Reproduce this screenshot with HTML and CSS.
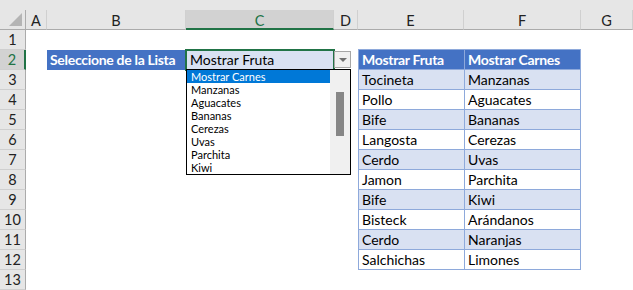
FILE: index.html
```html
<!DOCTYPE html>
<html lang="es">
<head>
    <meta charset="UTF-8">
    <title>Lista desplegable</title>
    <link rel="stylesheet" href="styles.css">
</head>
<body>
    <div class="sheet">
        <div class="top-band"></div>

        <div class="row heads">
            <div class="corner"><span class="tri"></span></div>
            <div class="col-head">A</div>
            <div class="col-head">B</div>
            <div class="col-head active">C</div>
            <div class="col-head">D</div>
            <div class="col-head">E</div>
            <div class="col-head">F</div>
            <div class="col-head">G</div>
        </div>

        <div class="row">
            <div class="row-head">1</div>
            <div></div><div></div><div></div><div></div>
            <div class="edge"></div><div class="edge"></div>
        </div>
        <div class="row">
            <div class="row-head active">2</div>
            <div></div>
            <div class="label">Seleccione de la Lista</div>
            <div class="current">Mostrar Fruta</div>
            <div></div>
            <div class="tcell th e">Mostrar Fruta</div>
            <div class="tcell th f">Mostrar Carnes</div>
        </div>
        <div class="row band">
            <div class="row-head">3</div>
            <div></div><div></div><div></div><div></div>
            <div class="tcell e">Tocineta</div><div class="tcell f">Manzanas</div>
        </div>
        <div class="row">
            <div class="row-head">4</div>
            <div></div><div></div><div></div><div></div>
            <div class="tcell e">Pollo</div><div class="tcell f">Aguacates</div>
        </div>
        <div class="row band">
            <div class="row-head">5</div>
            <div></div><div></div><div></div><div></div>
            <div class="tcell e">Bife</div><div class="tcell f">Bananas</div>
        </div>
        <div class="row">
            <div class="row-head">6</div>
            <div></div><div></div><div></div><div></div>
            <div class="tcell e">Langosta</div><div class="tcell f">Cerezas</div>
        </div>
        <div class="row band">
            <div class="row-head">7</div>
            <div></div><div></div><div></div><div></div>
            <div class="tcell e">Cerdo</div><div class="tcell f">Uvas</div>
        </div>
        <div class="row">
            <div class="row-head">8</div>
            <div></div><div></div><div></div><div></div>
            <div class="tcell e">Jamon</div><div class="tcell f">Parchita</div>
        </div>
        <div class="row band">
            <div class="row-head">9</div>
            <div></div><div></div><div></div><div></div>
            <div class="tcell e">Bife</div><div class="tcell f">Kiwi</div>
        </div>
        <div class="row">
            <div class="row-head">10</div>
            <div></div><div></div><div></div><div></div>
            <div class="tcell e">Bisteck</div><div class="tcell f">Arándanos</div>
        </div>
        <div class="row band">
            <div class="row-head">11</div>
            <div></div><div></div><div></div><div></div>
            <div class="tcell e">Cerdo</div><div class="tcell f">Naranjas</div>
        </div>
        <div class="row">
            <div class="row-head">12</div>
            <div></div><div></div><div></div><div></div>
            <div class="tcell e">Salchichas</div><div class="tcell f">Limones</div>
        </div>
        <div class="row">
            <div class="row-head">13</div>
        </div>

        <!-- validation dropdown, open -->
        <div class="drop-btn"><span class="arrow"></span></div>
        <div class="listbox">
            <ul class="items">
                <li class="selected">Mostrar Carnes</li>
                <li>Manzanas</li>
                <li>Aguacates</li>
                <li>Bananas</li>
                <li>Cerezas</li>
                <li>Uvas</li>
                <li>Parchita</li>
                <li>Kiwi</li>
            </ul>
            <div class="scroll"><span class="thumb"></span></div>
        </div>
    </div>
</body>
</html>
```

FILE: styles.css
```css
* {
    box-sizing: border-box;
}
body {
    margin: 0;
    background: #ffffff;
    font-family: Lato, "Open Sans", sans-serif;
    color: #000000;
}
.sheet {
    position: relative;
    width: 633px;
    height: 290px;
    overflow: hidden;
}
.top-band {
    height: 10px;
    background: #e6e6e6;
}
.row {
    display: grid;
    grid-template-columns: 26px 21px 139px 148px 24px 106px 117px 52px;
    height: 20px;
    font-size: 14px;
    line-height: 19px;
}
.row > div {
    white-space: nowrap;
    overflow: hidden;
}

/* column headers */
.heads > div {
    background: #e6e6e6;
    border-bottom: 1px solid #ababab;
    text-align: center;
    color: #222222;
    font-size: 14.5px;
}
.col-head {
    border-right: 1px solid #d0d0d0;
    padding-top: 1px;
}
.col-head.active {
    background: #d2d2d2;
    color: #217346;
    border-bottom: 2px solid #217346;
}
.corner {
    position: relative;
    border-right: 1px solid #ababab;
}
.corner .tri {
    position: absolute;
    right: 3px;
    bottom: 3px;
    width: 0;
    height: 0;
    border-left: 13px solid transparent;
    border-bottom: 13px solid #b4b4b4;
}

/* row headers */
.row-head {
    background: #e6e6e6;
    border-right: 1px solid #ababab;
    border-bottom: 1px solid #cfcfcf;
    text-align: center;
    color: #222222;
    font-size: 14.5px;
}
.row-head.active {
    background: #d2d2d2;
    color: #217346;
    border-right: 2px solid #217346;
}

/* selection cell */
.label {
    background: #4472c4;
    color: #ffffff;
    font-weight: bold;
    letter-spacing: -0.3px;
    padding: 0 3px;
}
.current {
    position: relative;
    background: #d9e1f2;
    padding: 0 4px;
    outline: 2px solid #217346;
    outline-offset: -1px;
}

/* table E:F */
.edge {
    border-bottom: 1px solid #8ea9db;
}
.tcell {
    padding: 0 3px;
    border-bottom: 1px solid #8ea9db;
}
.tcell.e {
    border-left: 1px solid #8ea9db;
}
.tcell.f {
    border-left: 1px solid #8ea9db;
    border-right: 1px solid #8ea9db;
}
.tcell.th {
    background: #4472c4;
    color: #ffffff;
    font-weight: bold;
    letter-spacing: -0.3px;
}
.band .tcell {
    background: #d9e1f2;
}

/* dropdown */
.drop-btn {
    position: absolute;
    left: 334px;
    top: 51px;
    width: 17px;
    height: 17px;
    background: #f0f0f0;
    border: 1px solid #a6a6a6;
}
.drop-btn .arrow {
    position: absolute;
    left: 4px;
    top: 6px;
    border-left: 4px solid transparent;
    border-right: 4px solid transparent;
    border-top: 4px solid #707070;
}
.listbox {
    position: absolute;
    left: 186px;
    top: 69px;
    width: 165px;
    height: 106px;
    border: 1px solid #000000;
    background: #ffffff;
    display: flex;
}
.items {
    list-style: none;
    margin: 0;
    padding: 0;
    flex: 1;
    font-size: 11px;
    line-height: 13px;
}
.items li {
    padding-left: 4px;
    height: 13px;
    color: #000000;
}
.items li.selected {
    background: #0078d7;
    color: #ffffff;
}
.scroll {
    position: relative;
    width: 20px;
    background: #f0f0f0;
}
.scroll .thumb {
    position: absolute;
    left: 6px;
    top: 22px;
    width: 8px;
    height: 44px;
    background: #868686;
}
```
